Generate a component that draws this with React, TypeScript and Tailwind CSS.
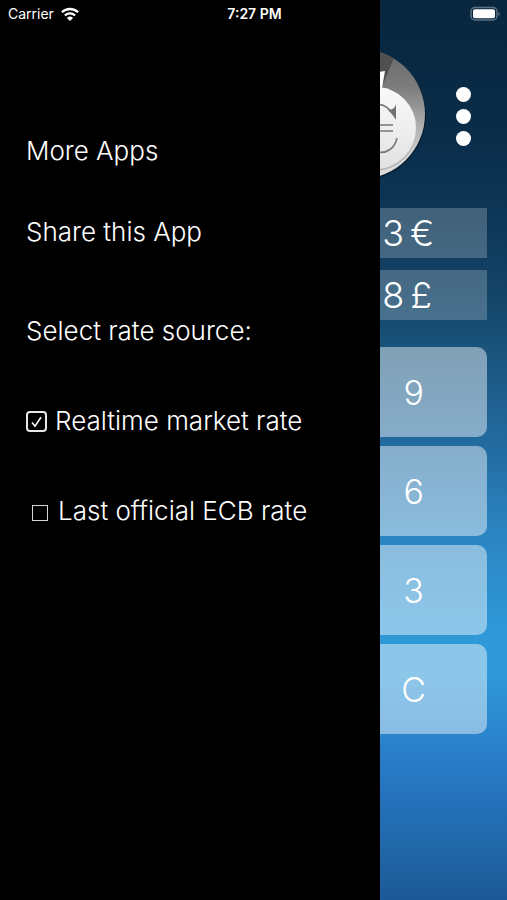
import { FC, useState } from "react";

type Source = "market" | "ecb";

const StatusBar: FC = () => (
  <header className="absolute inset-x-0 top-0 z-10 grid h-7 grid-cols-3 items-center pr-1.5 pl-2 text-white">
    <div className="flex items-center gap-1.5 text-sm">
      <span>Carrier</span>
      <svg className="h-3.5 w-5" viewBox="0 0 20 14" fill="currentColor">
        <path d="M10 14 6.9 10.9a4.6 4.6 0 0 1 6.2 0Z" />
        <path
          d="M4.9 8.5a7.4 7.4 0 0 1 10.2 0M1.9 5.3a11.6 11.6 0 0 1 16.2 0"
          fill="none"
          stroke="currentColor"
          strokeWidth="2.3"
        />
      </svg>
    </div>
    <div className="text-center text-sm font-semibold">7:27 PM</div>
    <svg className="h-4 w-8 justify-self-end" viewBox="0 0 32 16">
      <rect x="2" y="1.5" width="26" height="12.5" rx="4" fill="none" stroke="#5d7384" strokeWidth="1.5" />
      <rect x="4" y="3.2" width="22" height="9" rx="2" fill="#fff" />
      <path d="M29.5 6v4q1.5-.6 1.5-2T29.5 6Z" fill="#5d7384" />
    </svg>
  </header>
);

interface SourceOptionProps {
  label: string;
  checked: boolean;
  onSelect: () => void;
}

const SourceOption: FC<SourceOptionProps> = ({ label, checked, onSelect }) => (
  <label className="flex h-8 items-center">
    <span className={checked ? "relative mr-2 flex" : "relative mt-1 mr-2.5 ml-1.5 flex"}>
      <input
        type="checkbox"
        checked={checked}
        onChange={onSelect}
        className="size-4 appearance-none border border-gray-300 checked:size-[21px] checked:rounded checked:border-2 checked:border-gray-200"
      />
      {checked && (
        <svg
          className="pointer-events-none absolute inset-0 size-[21px]"
          viewBox="0 0 21 21"
          fill="none"
          stroke="#fff"
          strokeWidth="1.6"
        >
          <path d="m6 11.5 3 3.7 6-9" />
        </svg>
      )}
    </span>
    {label}
  </label>
);

const Drawer: FC = () => {
  const [source, setSource] = useState<Source>("market");

  return (
    <nav className="flex w-3/4 shrink-0 flex-col items-start bg-black pt-[135px] pl-[26px] text-[26px] leading-8 font-[350] text-white">
      <a href="#more">More Apps</a>
      <a href="#share" className="mt-[49px]">
        Share this App
      </a>
      <fieldset className="mt-[67px]">
        <legend>Select rate source:</legend>
        <div className="mt-[58px] flex flex-col gap-[58px]">
          <SourceOption
            label="Realtime market rate"
            checked={source === "market"}
            onSelect={() => setSource("market")}
          />
          <SourceOption
            label="Last official ECB rate"
            checked={source === "ecb"}
            onSelect={() => setSource("ecb")}
          />
        </div>
      </fieldset>
    </nav>
  );
};

const Logo: FC = () => (
  <svg className="h-[136px] w-[50px]" viewBox="0 0 50 136">
    <defs>
      <linearGradient id="rim" x1="0" y1="0" x2="0" y2="1">
        <stop offset="0" stopColor="#686868" />
        <stop offset="0.3" stopColor="#7c7c7c" />
        <stop offset="0.6" stopColor="#b0b0b0" />
        <stop offset="0.85" stopColor="#dcdcdc" />
      </linearGradient>
      <linearGradient id="coin" x1="0" y1="0" x2="0" y2="1">
        <stop offset="0" stopColor="#fafafa" />
        <stop offset="1" stopColor="#e2e2e2" />
      </linearGradient>
      <clipPath id="disc">
        <circle cx="-20" cy="68" r="65" />
      </clipPath>
    </defs>
    <circle cx="-19" cy="69" r="65" fill="#04131f" opacity="0.6" />
    <g clipPath="url(#disc)">
      <rect x="-90" width="140" height="136" fill="url(#rim)" />
      <path d="M0 0h19L4 36 0 42Z" fill="#505050" />
      <path d="M-2 26 5 25 2 42-2 44Z" fill="#fff" />
      <circle cx="-5" cy="83" r="42" fill="#b8b8b8" />
      <circle cx="-5" cy="82" r="41" fill="url(#coin)" />
      <path d="M-2 58.500c6 0 10 3 14 8" fill="none" stroke="#777" strokeWidth="1.6" />
      <path d="M16 58v16c-2-4-5-7-8-10 4 0 7-2 8-6Z" fill="#707070" />
      <path d="M0 79h13M0 85h13" stroke="#777" strokeWidth="1.4" />
      <path d="M-3 106c10 2 18-4 20-14" fill="none" stroke="#777" strokeWidth="1.6" />
    </g>
  </svg>
);

const amounts = [
  { value: "3", currency: "€" },
  { value: "8", currency: "£" },
];

const keys = ["9", "6", "3", "C"];

const Calculator: FC = () => (
  <main className="min-w-0 flex-1 bg-[linear-gradient(to_bottom,#08263e_0%,#092c48_14%,#0d3555_23%,#134468_33%,#1a547c_39%,#226a9f_49%,#2b84c0_59%,#2f99d8_70%,#2f98d8_75%,#2a84cc_82%,#2573be_88%,#2066a6_95%,#1c5998_100%)] pt-[46px] pr-5 font-[350] text-white">
    <div className="flex h-[136px] items-center justify-between">
      <Logo />
      <button type="button" aria-label="Menu" className="mt-1 mr-4 flex flex-col gap-[7px]">
        <span className="size-[15px] rounded-full bg-white" />
        <span className="size-[15px] rounded-full bg-white" />
        <span className="size-[15px] rounded-full bg-white" />
      </button>
    </div>
    <div className="mt-[26px] flex flex-col gap-3">
      {amounts.map((a) => (
        <output key={a.currency} className="flex h-[50px] items-center gap-1.5 bg-white/22 pl-0.5 text-4xl">
          <span>{a.value}</span>
          <span>{a.currency}</span>
        </output>
      ))}
    </div>
    <div className="mt-[27px] flex flex-col gap-[9px]">
      {keys.map((k) => (
        <button key={k} type="button" className="h-[90px] rounded-r-[10px] bg-white/45 pr-10 text-[34px]">
          {k}
        </button>
      ))}
    </div>
  </main>
);

export default function App() {
  return (
    <div className="relative flex min-h-screen font-['Inter',sans-serif]">
      <StatusBar />
      <Drawer />
      <Calculator />
    </div>
  );
}
